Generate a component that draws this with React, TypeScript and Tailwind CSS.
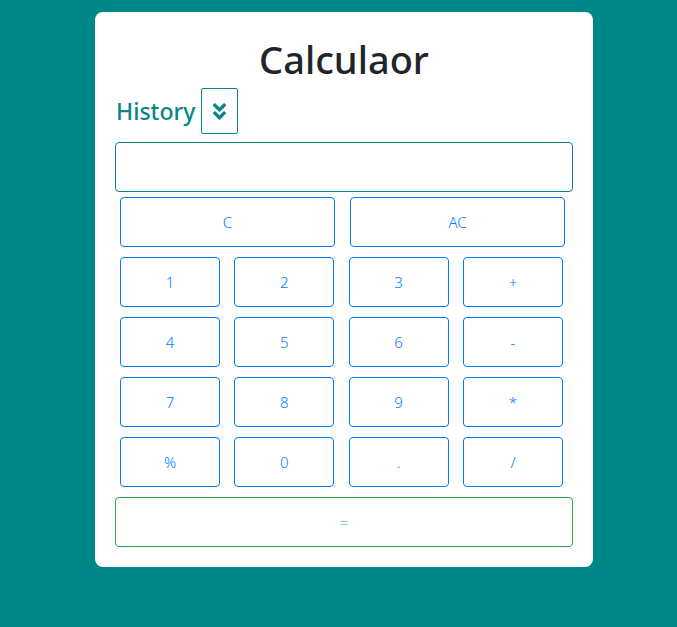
import { FaAngleDoubleDown } from "react-icons/fa";

const keys = ["1", "2", "3", "+", "4", "5", "6", "-", "7", "8", "9", "*", "%", "0", ".", "/"];

export default function App() {
  return (
    <div className="min-h-[627px] bg-[#008787] pt-[12px] font-['Noto_Sans',sans-serif]">
      <div className="ml-[95px] w-[498px] rounded-lg bg-white px-[20px] pt-[23px] pb-[20px]">
        <h1 className="text-center text-[38px] font-medium leading-[48px] text-[#212529]">Calculaor</h1>

        {/* History toggle */}
        <div className="mt-[5px] flex items-center gap-[6px]">
          <span className="pl-px text-[23px] font-medium text-[#0a8585]">History</span>
          <button
            type="button"
            className="flex h-[46px] w-[37px] items-center justify-center rounded-[2px] border border-[#0a8585] text-[#0a8585]"
          >
            <FaAngleDoubleDown className="h-[21px] w-[15px]" />
          </button>
        </div>

        <input
          type="text"
          className="mt-[8px] block h-[50px] w-full rounded border border-[#0a8585] px-3 outline-none"
        />

        <div className="mt-[5px] flex gap-[15px] pl-[5px]">
          <button type="button" className="h-[50px] w-[215px] rounded border border-[#007bff] text-[15px] font-light text-[#007bff]">
            C
          </button>
          <button type="button" className="h-[50px] w-[215px] rounded border border-[#007bff] text-[15px] font-light text-[#007bff]">
            AC
          </button>
        </div>

        <div className="mt-[10px] grid grid-cols-[100px_100px_100px_100px] gap-x-[14.33px] gap-y-[10px] pl-[5px]">
          {keys.map((k) => (
            <button
              key={k}
              type="button"
              className="h-[50px] rounded border border-[#007bff] text-[15px] font-light text-[#007bff]"
            >
              {k}
            </button>
          ))}
        </div>

        <button
          type="button"
          className="mt-[10px] h-[50px] w-full rounded border border-[#28a745] text-[15px] font-light text-[#28a745]"
        >
          =
        </button>
      </div>
    </div>
  );
}
